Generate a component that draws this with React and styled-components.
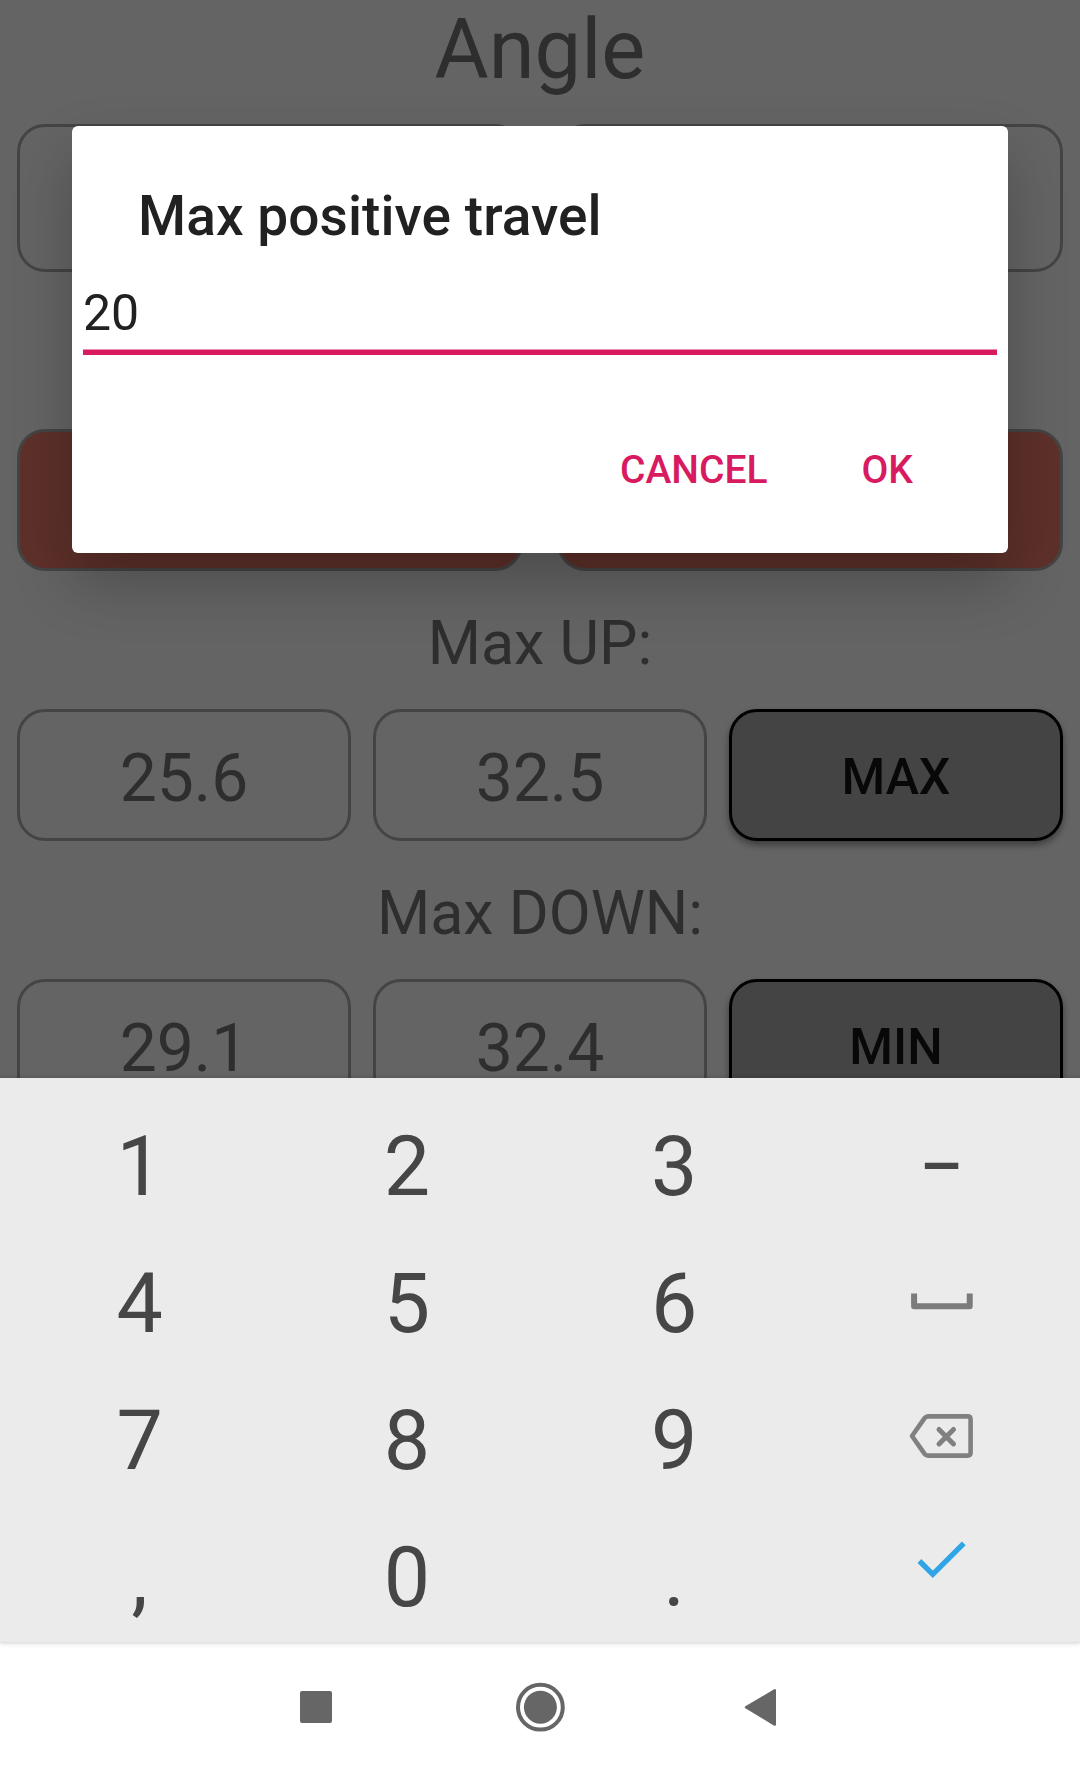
import React from "react";
import styled, { createGlobalStyle, css } from "styled-components";

const GlobalStyle = createGlobalStyle`
  * { box-sizing: border-box; }
  body {
    margin: 0;
    background: #fff;
    font-family: Roboto, "Noto Sans", sans-serif;
  }
`;

const Screen = styled.div`
  display: flex;
  flex-direction: column;
  width: 1080px;
  height: 1772px;
  overflow: hidden;
`;

const AppArea = styled.main`
  position: relative;
  flex: none;
  height: 1078px;
  overflow: hidden;
  background: #fafafa;
  color: #737373;
`;

const Heading = styled.h1`
  margin: 0;
  height: 124px;
  font-size: 83px;
  font-weight: 400;
  line-height: 100px;
  text-align: center;
`;

const Label = styled.h2`
  margin: 0;
  height: 138px;
  padding-top: 6px;
  font-size: 61px;
  font-weight: 400;
  line-height: 132px;
  text-align: center;
`;

const Row = styled.div`
  display: flex;
  gap: ${(p) => p.$gap}px;
  height: ${(p) => p.$height}px;
  margin-bottom: ${(p) => p.$after || 0}px;
  padding: 0 17px;
`;

const box = css`
  display: flex;
  flex: 1;
  align-items: center;
  justify-content: center;
  border: 3px solid #aaa;
  border-radius: 28px;
`;

const Field = styled.div`
  ${box}
  padding-top: 7px;
  background: ${(p) => (p.$alert ? "#ec7969" : "transparent")};
  font-size: 66px;
  line-height: 56px;
`;

const SetButton = styled.button`
  ${box}
  border-color: #000;
  padding: 4px 0 0;
  background: #aaa;
  box-shadow: 0 4px 7px rgba(0, 0, 0, 0.4);
  color: #161616;
  font: 500 50px Roboto, "Noto Sans", sans-serif;
`;

const Scrim = styled.div`
  position: absolute;
  inset: 0;
  display: flex;
  align-items: flex-start;
  justify-content: center;
  padding-top: 126px;
  background: rgba(0, 0, 0, 0.6);
`;

const Dialog = styled.section`
  width: 936px;
  height: 427px;
  padding: 58px 11px 0;
  border-radius: 6px;
  background: #fff;
  box-shadow: 0 30px 60px rgba(0, 0, 0, 0.24);
`;

const DialogTitle = styled.h3`
  margin: 0 0 36px;
  padding-left: 55px;
  color: #212121;
  font-size: 55px;
  font-weight: 500;
  letter-spacing: 0.07px;
  line-height: 64px;
`;

const DialogInput = styled.input`
  display: block;
  width: 100%;
  height: 58px;
  margin: 0 0 7px;
  padding: 0;
  border: 0;
  outline: 0;
  background: none;
  color: #212121;
  font: 400 50px/58px Roboto, "Noto Sans", sans-serif;
`;

const Underline = styled.div`
  height: 6px;
  background: linear-gradient(#eb8daf 1px, #d81b60 1px);
`;

const Actions = styled.div`
  display: flex;
  justify-content: flex-end;
  gap: 94px;
  margin-top: 92px;
  padding-right: 84px;
`;

const TextButton = styled.button`
  padding: 0;
  border: 0;
  background: none;
  color: #d81b60;
  font: 500 39px/46px Roboto, "Noto Sans", sans-serif;
`;

const Keyboard = styled.div`
  position: relative;
  display: grid;
  flex: none;
  grid-template-columns: repeat(4, 1fr);
  grid-template-rows: repeat(4, 137px);
  height: 565px;
  padding: 16.5px 5px 0 6px;
  background: #ebebeb;
  box-shadow: 0 0 5px rgba(0, 0, 0, 0.2), inset 0 -1px #e2e2e2;
`;

const Key = styled.button`
  display: flex;
  align-items: center;
  justify-content: center;
  padding: ${(p) => (p.$icon ? 0 : "7px 0 0")};
  border: 0;
  background: none;
  color: #464646;
  font: 400 82.5px Roboto, "Noto Sans", sans-serif;
`;

const DashGlyph = styled.span`
  margin-top: 5px;
  font-size: 67px;
  font-weight: 500;
`;

const NavBar = styled.nav`
  display: flex;
  flex: none;
  align-items: center;
  justify-content: center;
  gap: 160px;
  height: 129px;
  padding-bottom: 1px;
  background: #fff;
`;

const SpaceIcon = () => (
  <svg width="80" height="80" viewBox="900 1260 80 80">
    <path
      d="M913.1 1293.6V1306.2H968.7V1293.6"
      fill="none"
      stroke="#7b7b7b"
      strokeWidth="6"
      strokeLinejoin="round"
    />
  </svg>
);

const BackspaceIcon = () => (
  <svg width="80" height="80" viewBox="900 1397 80 80">
    <g fill="none" stroke="#808080" strokeLinecap="round" strokeLinejoin="round">
      <path d="M911 1436 L923.6 1418.2 Q925 1416.4 927 1416.4 H966.5 Q969.6 1416.4 969.6 1419.4 V1452.6 Q969.6 1455.6 966.5 1455.6 H927 Q925 1455.6 923.6 1453.8 Z" strokeWidth="4.6" />
      <path d="M938 1429.4L952.5 1443.9M952.5 1429.4L938 1443.9" strokeWidth="5" />
    </g>
  </svg>
);

const CheckIcon = () => (
  <svg width="80" height="80" viewBox="900 1534 80 80">
    <path d="M918.4 1561L931.8 1574.3L962.8 1543.3" fill="none" stroke="#2fa5e6" strokeWidth="5.4" />
  </svg>
);

const RecentsIcon = () => (
  <svg width="64" height="64" viewBox="284 1675 64 64">
    <rect x="300" y="1691" width="32" height="32" rx="2" fill="#666" />
  </svg>
);

const HomeIcon = () => (
  <svg width="64" height="64" viewBox="508 1675 64 64">
    <circle cx="540.4" cy="1707.2" r="22.4" fill="none" stroke="#666" strokeWidth="4" />
    <circle cx="540.4" cy="1707.2" r="16.5" fill="#666" />
  </svg>
);

const BackIcon = () => (
  <svg width="64" height="64" viewBox="732 1675 64 64">
    <path
      d="M746 1707.3L774.8 1690.2V1724.6Z"
      fill="#666"
      stroke="#666"
      strokeWidth="2.4"
      strokeLinejoin="round"
    />
  </svg>
);

const KEYS = [
  "1", "2", "3", <DashGlyph>–</DashGlyph>,
  "4", "5", "6", <SpaceIcon />,
  "7", "8", "9", <BackspaceIcon />,
  ",", "0", ".", <CheckIcon />,
];

const LIMITS = [
  { label: "Max UP:", values: ["25.6", "32.5"], action: "MAX" },
  { label: "Max DOWN:", values: ["29.1", "32.4"], action: "MIN" },
];

export default function App() {
  return (
    <Screen>
      <GlobalStyle />
      <AppArea>
        <Heading>Angle</Heading>
        <Row $gap={34} $height={148} $after={157}>
          <Field />
          <Field />
        </Row>
        <Row $gap={34} $height={142}>
          <Field $alert />
          <Field $alert />
        </Row>
        {LIMITS.map(({ label, values, action }) => (
          <React.Fragment key={label}>
            <Label>{label}</Label>
            <Row $gap={22} $height={132}>
              {values.map((value) => (
                <Field key={value}>{value}</Field>
              ))}
              <SetButton>{action}</SetButton>
            </Row>
          </React.Fragment>
        ))}
        <Scrim>
          <Dialog>
            <DialogTitle>Max positive travel</DialogTitle>
            <DialogInput defaultValue="20" />
            <Underline />
            <Actions>
              <TextButton>CANCEL</TextButton>
              <TextButton>OK</TextButton>
            </Actions>
          </Dialog>
        </Scrim>
      </AppArea>
      <Keyboard>
        {KEYS.map((key, i) => (
          <Key key={i} $icon={typeof key !== "string"}>
            {key}
          </Key>
        ))}
      </Keyboard>
      <NavBar>
        <RecentsIcon />
        <HomeIcon />
        <BackIcon />
      </NavBar>
    </Screen>
  );
}
